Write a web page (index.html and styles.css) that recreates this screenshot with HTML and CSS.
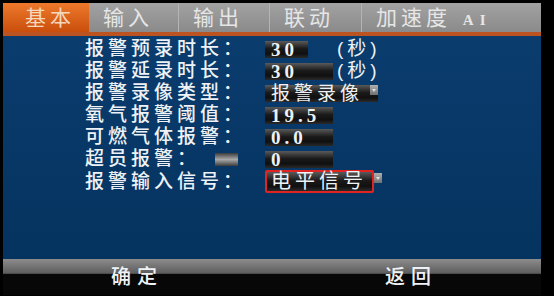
FILE: index.html
```html
<!DOCTYPE html>
<html lang="zh">

<head>
    <meta charset="UTF-8">
    <meta name="viewport" content="width=device-width, initial-scale=1.0">
    <title>报警设置</title>
    <link rel="stylesheet" href="styles.css">
</head>

<body>
    <div class="screen">
        <div class="tabs">
            <div class="tab active t1">基本</div>
            <div class="tab t2">输入</div>
            <div class="tab t3">输出</div>
            <div class="tab t4">联动</div>
            <div class="tab t5">加速度 <span class="ai">AI</span></div>
        </div>

        <div class="panel">
            <div class="row">
                <div class="label">报警预录时长：</div>
                <div class="field w1 num">30</div>
                <div class="unit">(秒)</div>
            </div>
            <div class="row">
                <div class="label">报警延录时长：</div>
                <div class="field w2 num">30</div>
                <div class="unit">(秒)</div>
            </div>
            <div class="row">
                <div class="label">报警录像类型：</div>
                <div class="field w3">报警录像<span class="arrow"></span></div>
            </div>
            <div class="row">
                <div class="label">氧气报警阈值：</div>
                <div class="field w2 num">19.5</div>
            </div>
            <div class="row">
                <div class="label">可燃气体报警：</div>
                <div class="field w2 num">0.0</div>
            </div>
            <div class="row">
                <div class="label">超员报警：<span class="toggle"></span></div>
                <div class="field w2 num">0</div>
            </div>
            <div class="row last">
                <div class="label">报警输入信号：</div>
                <div class="select-wrap">
                    <div class="field w4 selected">电平信号</div>
                    <span class="arrow"></span>
                </div>
            </div>
        </div>

        <div class="footer">
            <div class="btn">确定</div>
            <div class="btn">返回</div>
        </div>
    </div>
</body>

</html>
```

FILE: styles.css
```css
* {
    box-sizing: border-box;
    padding: 0;
    margin: 0;
}

body {
    background-color: #000;
    width: 554px;
    height: 296px;
    overflow: hidden;
    font-family: "Liberation Sans", "Noto Sans CJK SC", sans-serif;
    color: #eef2f6;
}

.screen {
    width: 538px;
    margin-left: 3px;
    padding-top: 3px;
}

/* tab bar */
.tabs {
    display: flex;
    height: 33px;
    border-bottom: 4px solid #bb5420;
    background: linear-gradient(#a2a2a2, #8a8a8a);
}

.tab {
    height: 29px;
    line-height: 29px;
    font-size: 21px;
    letter-spacing: 4px;
    padding-left: 14px;
    color: #e6e6e6;
    border-right: 1px solid #b4b4b4;
    white-space: nowrap;
}

.tab.active {
    padding-left: 22px;
    color: #f6d8bc;
    background: linear-gradient(#ee7a2c, #c94e0c);
    border-right: none;
}

.t1 { width: 86px; }
.t2 { width: 90px; }
.t3 { width: 91px; }
.t4 { width: 92px; }
.t5 { flex: 1; border-right: none; }

.tab .ai {
    font-family: "Liberation Serif", serif;
    font-weight: bold;
    font-size: 15px;
    letter-spacing: 6px;
    margin-left: 2px;
}

/* form */
.panel {
    height: 223px;
    background: linear-gradient(#0a3c6e, #05335f);
    padding-top: 2px;
    padding-left: 82px;
}

.row {
    display: flex;
    align-items: center;
    height: 22px;
    line-height: 20px;
}

.row.last {
    height: 23px;
}

.label {
    width: 180px;
    display: flex;
    align-items: center;
    font-size: 19px;
    line-height: 20px;
    letter-spacing: 4px;
    font-weight: 500;
    white-space: nowrap;
}

.toggle {
    display: inline-block;
    width: 23px;
    height: 13px;
    margin-left: 15px;
    background: linear-gradient(#3c3c3c, #a8a8a8 50%, #3c3c3c);
}

.field {
    position: relative;
    height: 17px;
    line-height: 17px;
    padding-left: 6px;
    font-size: 19px;
    letter-spacing: 4px;
    white-space: nowrap;
    background: linear-gradient(#5a5a5a, #1a1a1a 45%, #101010 75%, #2a2a2a);
}

.field.num {
    font-family: "Liberation Serif", serif;
    font-weight: bold;
    font-size: 19px;
    letter-spacing: 4px;
}

.w1 { width: 43px; }
.w2 { width: 68px; }
.w3 { width: 113px; }
.w4 { width: 109px; }

.unit {
    margin-left: 29px;
    font-size: 19px;
    line-height: 20px;
    letter-spacing: 4px;
}

.row:nth-child(2) .unit {
    margin-left: 4px;
}

.arrow {
    position: absolute;
    right: 0;
    top: 0;
    width: 8px;
    height: 10px;
    background: linear-gradient(#b0b0b0, #707070);
}

.arrow::after {
    content: "";
    position: absolute;
    left: 2px;
    top: 4px;
    border-left: 2px solid transparent;
    border-right: 2px solid transparent;
    border-top: 3px solid #e0e0e0;
}

.select-wrap {
    position: relative;
    display: flex;
    width: 117px;
}

.select-wrap .arrow {
    top: 3px;
}

.field.selected {
    height: 23px;
    line-height: 19px;
    padding-left: 4px;
    border: 2px solid #e02424;
    border-radius: 2px;
    font-size: 20px;
}

/* footer */
.footer {
    display: flex;
    height: 36px;
    padding-top: 7px;
    background: linear-gradient(#8c8c8c, #5e5e5e 14px, #3a3a3a 15px, #070707 15px);
}

.btn {
    font-size: 20px;
    font-weight: 500;
    letter-spacing: 6px;
    line-height: 22px;
}

.btn:first-child {
    margin-left: 108px;
}

.btn:last-child {
    margin-left: 222px;
}
```
